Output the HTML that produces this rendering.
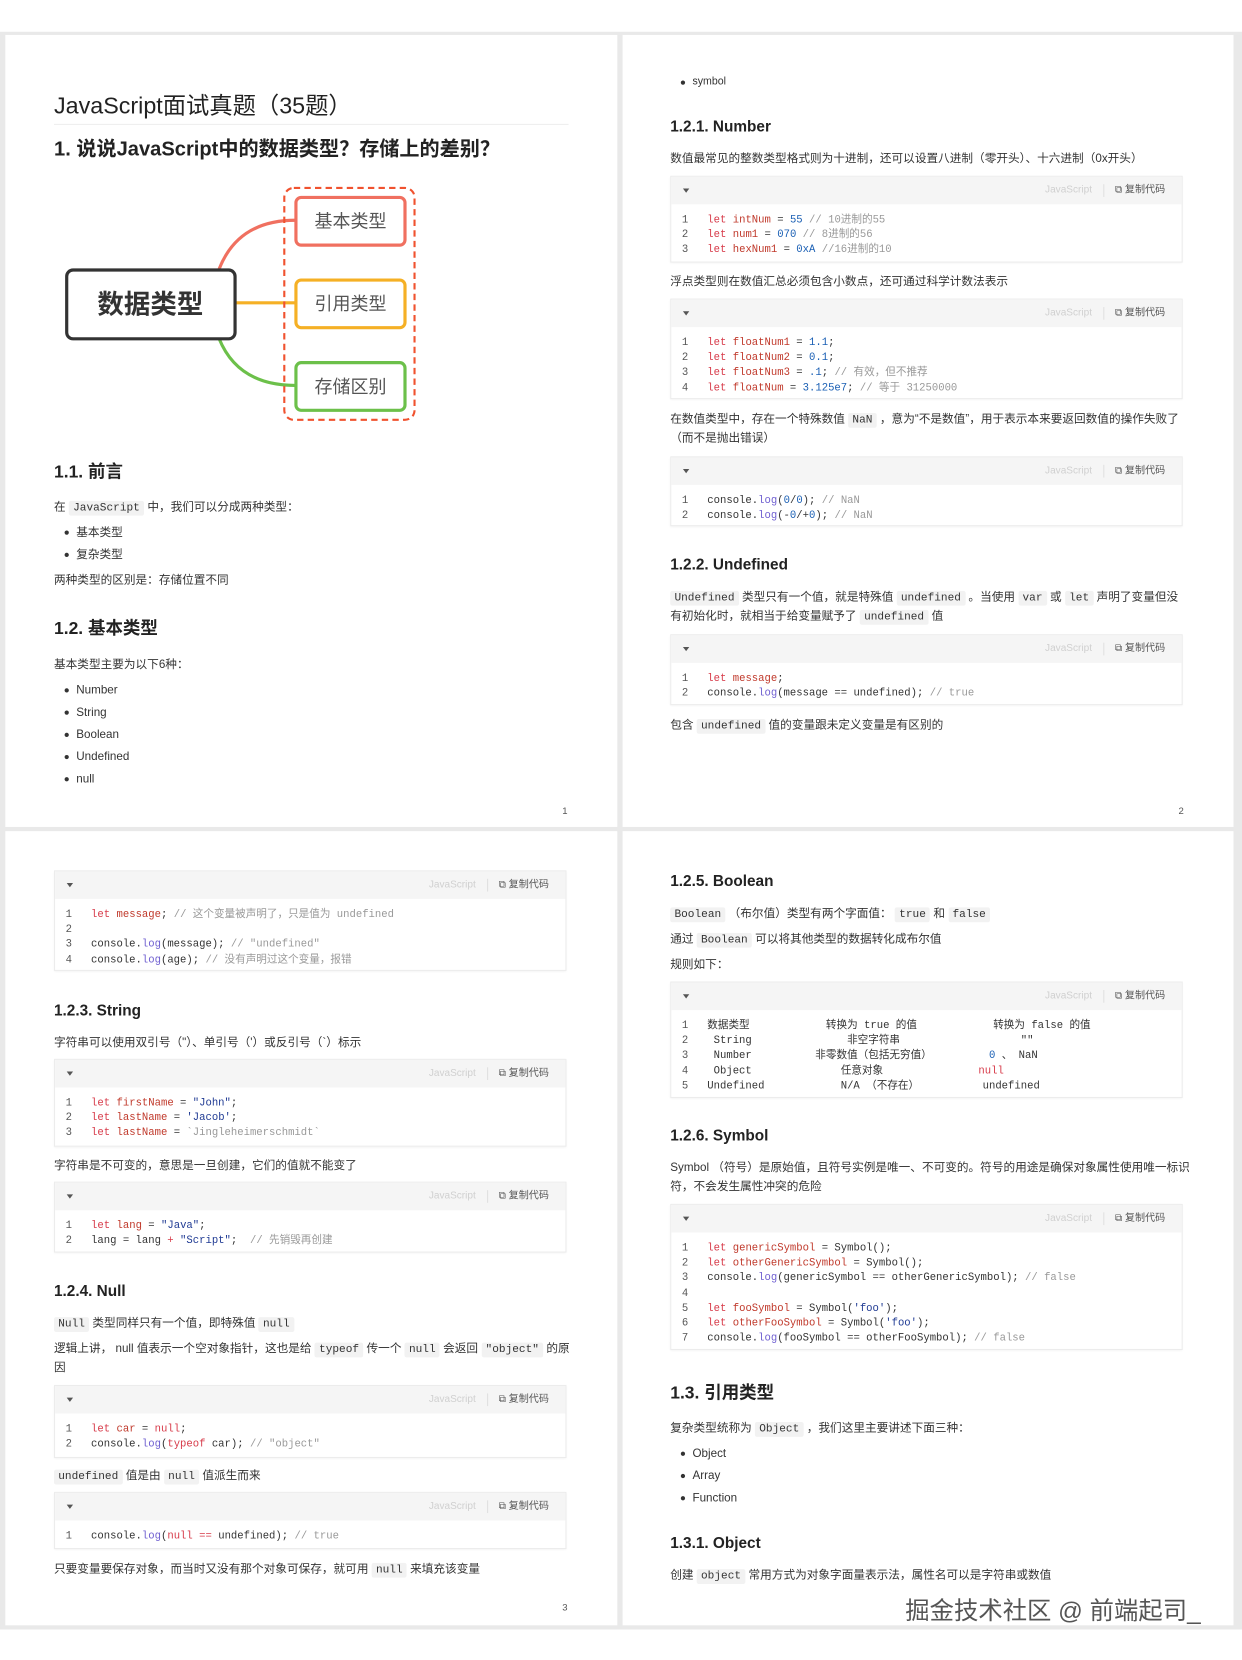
<!DOCTYPE html>
<html><head><meta charset="utf-8"><style>
*{margin:0;padding:0;box-sizing:border-box}
html,body{width:1242px;height:1660px;overflow:hidden;background:#fff}
#w{position:absolute;left:0;top:0;width:1173px;height:1568px;transform:scale(1.05882);transform-origin:0 0;background:#fff;font-family:"Liberation Sans","Noto Sans CJK SC",sans-serif;color:#333}
.bg{position:absolute;left:0;top:30px;width:1173px;height:1509px;background:#e9e9e9}
.pg{position:absolute;background:#fff}
.t{position:absolute;white-space:nowrap;line-height:18px;font-size:11px;color:#333;margin-top:2px}
.h3{font-size:14.5px;font-weight:bold;color:#222;line-height:20px}
.h2{font-size:16.5px;font-weight:bold;color:#222;line-height:22px}
code,.m{font-family:"Liberation Mono","Noto Sans CJK SC",monospace}
code{background:#f2f2f2;padding:1px 4px;border-radius:2px;font-size:10.5px;color:#333}
.li::before{content:"";position:absolute;left:-11px;top:7px;width:4px;height:4px;border-radius:50%;background:#333}
.cb{position:absolute;width:484px;background:#fff;border:1px solid #ececec;box-shadow:0 1px 2px rgba(0,0,0,.05)}
.cb .hd{position:absolute;left:0;top:0;right:0;height:26px;background:#f5f5f5}
.cb .ar{position:absolute;left:11px;top:11px;width:0;height:0;border-left:3px solid transparent;border-right:3px solid transparent;border-top:4px solid #555}
.cb .js{position:absolute;left:353px;top:6px;font-size:9.5px;color:#d0d0d0;line-height:14px}
.cb .sp{position:absolute;left:408px;top:7px;width:1px;height:12px;background:#e0e0e0}
.cb .cp{position:absolute;left:419px;top:6px;font-size:9.5px;color:#555;line-height:14px}
.cb .ln{position:absolute;left:10px;top:35px;font-family:"Liberation Mono",monospace;font-size:10px;line-height:14.2px;color:#555}
.cb .cd{position:absolute;left:34px;top:35px;font-family:"Liberation Mono","Noto Sans CJK SC",monospace;font-size:10px;line-height:14.2px;color:#333;white-space:pre}
.k{color:#d73a49}.v{color:#c0392b}.n{color:#1a5fb4}.s{color:#1f3a93}.c{color:#999}.f{color:#6f5fd0}
.pn{position:absolute;font-size:9px;color:#555}
</style></head><body><div id="w">
<div class="bg"></div>

<!-- PAGE 1 -->
<div class="pg" style="left:5px;top:33px;width:578px;height:748px"></div>
<div class="t" style="left:51px;top:85px;font-size:22px;line-height:26px;color:#222">JavaScript面试真题（35题）</div>
<div style="position:absolute;left:51px;top:117px;width:486px;height:1px;background:#eee"></div>
<div class="t" style="left:51px;top:128px;font-size:19px;line-height:24px;font-weight:bold;color:#222">1. 说说JavaScript中的数据类型？存储上的差别？</div>
<svg style="position:absolute;left:0;top:0" width="600" height="420" viewBox="0 0 600 420">
<path d="M207 254 Q225 208 279 208" fill="none" stroke="#f07060" stroke-width="3"/>
<path d="M222 286 L279 286" fill="none" stroke="#f5b025" stroke-width="3"/>
<path d="M207 320 Q225 364 279 364" fill="none" stroke="#6cc04a" stroke-width="3"/>
<rect x="268.5" y="177.5" width="123" height="219" rx="9" fill="none" stroke="#f0522f" stroke-width="2" stroke-dasharray="6 4"/>
<rect x="279.5" y="186.5" width="103" height="45" rx="5" fill="#fff" stroke="#f07060" stroke-width="3"/>
<rect x="279.5" y="264.5" width="103" height="45" rx="5" fill="#fff" stroke="#f5b025" stroke-width="3"/>
<rect x="279.5" y="342.5" width="103" height="45" rx="5" fill="#fff" stroke="#6cc04a" stroke-width="3"/>
<rect x="63" y="255" width="159" height="65" rx="6" fill="#fff" stroke="#333" stroke-width="3"/>
<text x="331" y="215" text-anchor="middle" font-size="17" fill="#555" font-family="Noto Sans CJK SC,sans-serif">基本类型</text>
<text x="331" y="293" text-anchor="middle" font-size="17" fill="#555" font-family="Noto Sans CJK SC,sans-serif">引用类型</text>
<text x="331" y="371" text-anchor="middle" font-size="17" fill="#555" font-family="Noto Sans CJK SC,sans-serif">存储区别</text>
<text x="142" y="296" text-anchor="middle" font-size="25" font-weight="bold" fill="#333" font-family="Noto Sans CJK SC,sans-serif">数据类型</text>
</svg>
<div class="t h2" style="left:51px;top:433px">1.1. 前言</div>
<div class="t" style="left:51px;top:468px">在 <code>JavaScript</code> 中，我们可以分成两种类型：</div>
<div class="t li" style="left:72px;top:492px">基本类型</div>
<div class="t li" style="left:72px;top:513px">复杂类型</div>
<div class="t" style="left:51px;top:537px">两种类型的区别是：存储位置不同</div>
<div class="t h2" style="left:51px;top:581px">1.2. 基本类型</div>
<div class="t" style="left:51px;top:617px">基本类型主要为以下6种：</div>
<div class="t li" style="left:72px;top:641px">Number</div>
<div class="t li" style="left:72px;top:662px">String</div>
<div class="t li" style="left:72px;top:683px">Boolean</div>
<div class="t li" style="left:72px;top:704px">Undefined</div>
<div class="t li" style="left:72px;top:725px">null</div>
<div class="pn" style="left:531px;top:761px">1</div>

<!-- PAGE 2 -->
<div class="pg" style="left:588px;top:33px;width:577px;height:748px"></div>
<div class="t li" style="left:654px;top:67px;font-size:10px">symbol</div>
<div class="t h3" style="left:633px;top:108px">1.2.1. Number</div>
<div class="t" style="left:633px;top:139px">数值最常见的整数类型格式则为十进制，还可以设置八进制（零开头）、十六进制（0x开头）</div>
<div class="cb" style="left:633px;top:166px;height:82px"><div class="hd"><div class="ar"></div><div class="js">JavaScript</div><div class="sp"></div><div class="cp">⧉ 复制代码</div></div>
<div class="ln">1<br>2<br>3</div><div class="cd"><span class="k">let</span> <span class="v">intNum</span> = <span class="n">55</span> <span class="c">// 10进制的55</span>
<span class="k">let</span> <span class="v">num1</span> = <span class="n">070</span> <span class="c">// 8进制的56</span>
<span class="k">let</span> <span class="v">hexNum1</span> = <span class="n">0xA</span> <span class="c">//16进制的10</span></div></div>
<div class="t" style="left:633px;top:255px">浮点类型则在数值汇总必须包含小数点，还可通过科学计数法表示</div>
<div class="cb" style="left:633px;top:282px;height:95px"><div class="hd"><div class="ar"></div><div class="js">JavaScript</div><div class="sp"></div><div class="cp">⧉ 复制代码</div></div>
<div class="ln">1<br>2<br>3<br>4</div><div class="cd"><span class="k">let</span> <span class="v">floatNum1</span> = <span class="n">1.1</span>;
<span class="k">let</span> <span class="v">floatNum2</span> = <span class="n">0.1</span>;
<span class="k">let</span> <span class="v">floatNum3</span> = <span class="n">.1</span>; <span class="c">// 有效，但不推荐</span>
<span class="k">let</span> <span class="v">floatNum</span> = <span class="n">3.125e7</span>; <span class="c">// 等于 31250000</span></div></div>
<div class="t" style="left:633px;top:385px">在数值类型中，存在一个特殊数值 <code>NaN</code> ，意为“不是数值”，用于表示本来要返回数值的操作失败了</div>
<div class="t" style="left:633px;top:403px">（而不是抛出错误）</div>
<div class="cb" style="left:633px;top:431px;height:66px"><div class="hd"><div class="ar"></div><div class="js">JavaScript</div><div class="sp"></div><div class="cp">⧉ 复制代码</div></div>
<div class="ln">1<br>2</div><div class="cd">console.<span class="f">log</span>(<span class="n">0</span>/<span class="n">0</span>); <span class="c">// NaN</span>
console.<span class="f">log</span>(-<span class="n">0</span>/+<span class="n">0</span>); <span class="c">// NaN</span></div></div>
<div class="t h3" style="left:633px;top:522px">1.2.2. Undefined</div>
<div class="t" style="left:633px;top:553px"><code>Undefined</code> 类型只有一个值，就是特殊值 <code>undefined</code> 。当使用 <code>var</code> 或 <code>let</code> 声明了变量但没</div>
<div class="t" style="left:633px;top:571px">有初始化时，就相当于给变量赋予了 <code>undefined</code> 值</div>
<div class="cb" style="left:633px;top:599px;height:67px"><div class="hd"><div class="ar"></div><div class="js">JavaScript</div><div class="sp"></div><div class="cp">⧉ 复制代码</div></div>
<div class="ln">1<br>2</div><div class="cd"><span class="k">let</span> <span class="v">message</span>;
console.<span class="f">log</span>(message == undefined); <span class="c">// true</span></div></div>
<div class="t" style="left:633px;top:674px">包含 <code>undefined</code> 值的变量跟未定义变量是有区别的</div>
<div class="pn" style="left:1113px;top:761px">2</div>

<!-- PAGE 3 -->
<div class="pg" style="left:5px;top:785px;width:578px;height:750px"></div>
<div class="cb" style="left:51px;top:822px;height:95px"><div class="hd"><div class="ar"></div><div class="js">JavaScript</div><div class="sp"></div><div class="cp">⧉ 复制代码</div></div>
<div class="ln">1<br>2<br>3<br>4</div><div class="cd"><span class="k">let</span> <span class="v">message</span>; <span class="c">// 这个变量被声明了，只是值为 undefined</span>

console.<span class="f">log</span>(message); <span class="c">// "undefined"</span>
console.<span class="f">log</span>(age); <span class="c">// 没有声明过这个变量，报错</span></div></div>
<div class="t h3" style="left:51px;top:943px">1.2.3. String</div>
<div class="t" style="left:51px;top:974px">字符串可以使用双引号（"）、单引号（'）或反引号（`）标示</div>
<div class="cb" style="left:51px;top:1000px;height:83px"><div class="hd"><div class="ar"></div><div class="js">JavaScript</div><div class="sp"></div><div class="cp">⧉ 复制代码</div></div>
<div class="ln">1<br>2<br>3</div><div class="cd"><span class="k">let</span> <span class="v">firstName</span> = <span class="s">"John"</span>;
<span class="k">let</span> <span class="v">lastName</span> = <span class="s">'Jacob'</span>;
<span class="k">let</span> <span class="v">lastName</span> = <span class="c">`Jingleheimerschmidt`</span></div></div>
<div class="t" style="left:51px;top:1090px">字符串是不可变的，意思是一旦创建，它们的值就不能变了</div>
<div class="cb" style="left:51px;top:1116px;height:67px"><div class="hd"><div class="ar"></div><div class="js">JavaScript</div><div class="sp"></div><div class="cp">⧉ 复制代码</div></div>
<div class="ln">1<br>2</div><div class="cd"><span class="k">let</span> <span class="v">lang</span> = <span class="s">"Java"</span>;
lang = lang <span class="k">+</span> <span class="s">"Script"</span>;  <span class="c">// 先销毁再创建</span></div></div>
<div class="t h3" style="left:51px;top:1208px">1.2.4. Null</div>
<div class="t" style="left:51px;top:1239px"><code>Null</code> 类型同样只有一个值，即特殊值 <code>null</code></div>
<div class="t" style="left:51px;top:1263px">逻辑上讲， null 值表示一个空对象指针，这也是给 <code>typeof</code> 传一个 <code>null</code> 会返回 <code>"object"</code> 的原</div>
<div class="t" style="left:51px;top:1281px">因</div>
<div class="cb" style="left:51px;top:1308px;height:69px"><div class="hd"><div class="ar"></div><div class="js">JavaScript</div><div class="sp"></div><div class="cp">⧉ 复制代码</div></div>
<div class="ln">1<br>2</div><div class="cd"><span class="k">let</span> <span class="v">car</span> = <span class="k">null</span>;
console.<span class="f">log</span>(<span class="k">typeof</span> car); <span class="c">// "object"</span></div></div>
<div class="t" style="left:51px;top:1383px"><code>undefined</code> 值是由 <code>null</code> 值派生而来</div>
<div class="cb" style="left:51px;top:1409px;height:54px"><div class="hd"><div class="ar"></div><div class="js">JavaScript</div><div class="sp"></div><div class="cp">⧉ 复制代码</div></div>
<div class="ln">1</div><div class="cd">console.<span class="f">log</span>(<span class="k">null</span> <span class="k">==</span> undefined); <span class="c">// true</span></div></div>
<div class="t" style="left:51px;top:1471px">只要变量要保存对象，而当时又没有那个对象可保存，就可用 <code>null</code> 来填充该变量</div>
<div class="pn" style="left:531px;top:1513px">3</div>

<!-- PAGE 4 -->
<div class="pg" style="left:588px;top:785px;width:577px;height:750px"></div>
<div class="t h3" style="left:633px;top:821px">1.2.5. Boolean</div>
<div class="t" style="left:633px;top:852px"><code>Boolean</code> （布尔值）类型有两个字面值： <code>true</code> 和 <code>false</code></div>
<div class="t" style="left:633px;top:876px">通过 <code>Boolean</code> 可以将其他类型的数据转化成布尔值</div>
<div class="t" style="left:633px;top:900px">规则如下：</div>
<div class="cb" style="left:633px;top:927px;height:110px"><div class="hd"><div class="ar"></div><div class="js">JavaScript</div><div class="sp"></div><div class="cp">⧉ 复制代码</div></div>
<div class="ln">1<br>2<br>3<br>4<br>5</div><div class="cd">数据类型            转换为 true 的值            转换为 false 的值
 String               非空字符串                   ""
 Number          非零数值（包括无穷值）         <span class="n">0</span> 、 NaN
 Object              任意对象               <span class="k">null</span>
Undefined            N/A （不存在）          undefined</div></div>
<div class="t h3" style="left:633px;top:1061px">1.2.6. Symbol</div>
<div class="t" style="left:633px;top:1092px">Symbol （符号）是原始值，且符号实例是唯一、不可变的。符号的用途是确保对象属性使用唯一标识</div>
<div class="t" style="left:633px;top:1110px">符，不会发生属性冲突的危险</div>
<div class="cb" style="left:633px;top:1137px;height:138px"><div class="hd"><div class="ar"></div><div class="js">JavaScript</div><div class="sp"></div><div class="cp">⧉ 复制代码</div></div>
<div class="ln">1<br>2<br>3<br>4<br>5<br>6<br>7</div><div class="cd"><span class="k">let</span> <span class="v">genericSymbol</span> = Symbol();
<span class="k">let</span> <span class="v">otherGenericSymbol</span> = Symbol();
console.<span class="f">log</span>(genericSymbol == otherGenericSymbol); <span class="c">// false</span>

<span class="k">let</span> <span class="v">fooSymbol</span> = Symbol(<span class="s">'foo'</span>);
<span class="k">let</span> <span class="v">otherFooSymbol</span> = Symbol(<span class="s">'foo'</span>);
console.<span class="f">log</span>(fooSymbol == otherFooSymbol); <span class="c">// false</span></div></div>
<div class="t h2" style="left:633px;top:1303px">1.3. 引用类型</div>
<div class="t" style="left:633px;top:1338px">复杂类型统称为 <code>Object</code> ，我们这里主要讲述下面三种：</div>
<div class="t li" style="left:654px;top:1362px">Object</div>
<div class="t li" style="left:654px;top:1383px">Array</div>
<div class="t li" style="left:654px;top:1404px">Function</div>
<div class="t h3" style="left:633px;top:1446px">1.3.1. Object</div>
<div class="t" style="left:633px;top:1477px">创建 <code>object</code> 常用方式为对象字面量表示法，属性名可以是字符串或数值</div>
<div class="t" style="left:855px;top:1504px;font-size:23px;line-height:30px;color:#555;text-shadow:0 0 2px #fff,0 0 2px #fff">掘金技术社区 @ 前端起司_</div>
</div></body></html>
